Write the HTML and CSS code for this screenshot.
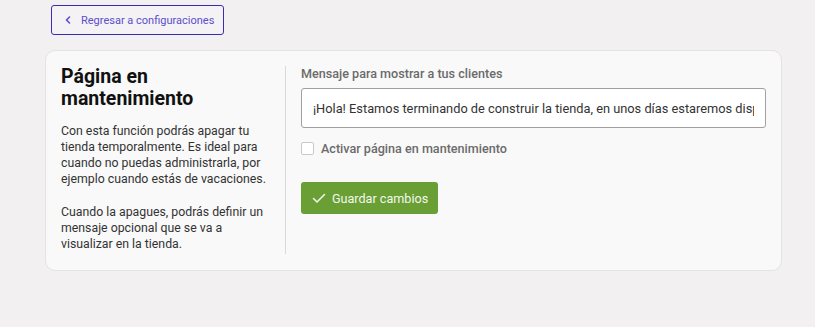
FILE: index.html
```html
<!DOCTYPE html>
<html lang="es">
<head>
    <meta charset="UTF-8">
    <meta name="viewport" content="width=device-width, initial-scale=1.0">
    <title>Página en mantenimiento</title>
    <link rel="stylesheet" href="styles.css">
</head>
<body>
    <div class="top-bar">
        <a href="#" class="back-button">
            <svg width="8" height="8" viewBox="0 0 8 8"><path d="M5.5 1 L2.5 4 L5.5 7" fill="none" stroke="currentColor" stroke-width="1.6" stroke-linecap="round" stroke-linejoin="round"/></svg>
            Regresar a configuraciones
        </a>
    </div>

    <div class="card">
        <div class="card-info">
            <h2>Página en mantenimiento</h2>
            <p>Con esta función podrás apagar tu tienda temporalmente. Es ideal para cuando no puedas administrarla, por ejemplo cuando estás de vacaciones.</p>
            <p>Cuando la apagues, podrás definir un mensaje opcional que se va a visualizar en la tienda.</p>
        </div>

        <div class="card-form">
            <label class="field-label" for="message">Mensaje para mostrar a tus clientes</label>
            <input type="text" id="message" class="text-input" value="¡Hola! Estamos terminando de construir la tienda, en unos días estaremos disponibles.">

            <label class="check-row">
                <input type="checkbox" class="check-box">
                <span>Activar página en mantenimiento</span>
            </label>

            <button class="save-button">
                <svg width="14" height="14" viewBox="0 0 14 14"><path d="M1.5 7.5 L5 11 L12.5 3.5" fill="none" stroke="currentColor" stroke-width="1.5" stroke-linecap="round" stroke-linejoin="round"/></svg>
                Guardar cambios
            </button>
        </div>
    </div>
</body>
</html>
```

FILE: styles.css
```css
* {
    margin: 0;
    padding: 0;
    box-sizing: border-box;
    font-family: 'Roboto', 'Noto Sans', sans-serif;
}

body {
    background-color: #f2f0f1;
    padding: 5px 33px 0 45px;
    color: #333;
}

/* Back link */
.top-bar {
    padding-left: 6px;
    height: 45px;
}

.back-button {
    display: inline-flex;
    align-items: center;
    gap: 9px;
    height: 30px;
    width: 173px;
    padding: 0 0 0 12px;
    border: 1px solid #3a2db0;
    border-radius: 3px;
    color: #5a4fcc;
    font-size: 11px;
    white-space: nowrap;
    text-decoration: none;
    background-color: #f4f2f5;
}

/* Card */
.card {
    display: flex;
    background-color: #f9f9f9;
    border: 1px solid #e3e3e3;
    border-radius: 10px;
    padding: 15px 15px 16px;
}

.card-info {
    width: 225px;
    flex-shrink: 0;
    padding-right: 16px;
    border-right: 1px solid #d9d9d9;
    padding-bottom: 2px;
}

.card-info h2 {
    font-size: 19.5px;
    font-weight: 700;
    line-height: 22px;
    color: #111;
    margin-bottom: 13px;
}

.card-info p {
    font-size: 12.3px;
    line-height: 16px;
    color: #333;
    margin-bottom: 17px;
}

.card-info p:last-child {
    margin-bottom: 0;
}

.card-form {
    flex-grow: 1;
    padding-left: 15px;
    display: flex;
    flex-direction: column;
    align-items: flex-start;
}

.field-label {
    font-size: 12.6px;
    font-weight: 500;
    line-height: 16px;
    color: #6b6b6b;
    margin-bottom: 6px;
}

.text-input {
    width: 100%;
    height: 40px;
    border: 1px solid #a0a0a0;
    border-radius: 3px;
    background-color: #fff;
    padding: 0 11px;
    font-size: 12.8px;
    color: #333;
    outline: none;
}

.check-row {
    display: flex;
    align-items: center;
    gap: 7px;
    margin-top: 13px;
    font-size: 12.6px;
    font-weight: 500;
    color: #6b6b6b;
}

.check-box {
    appearance: none;
    width: 13px;
    height: 13px;
    border: 1px solid #c9c9c9;
    border-radius: 2px;
    background-color: #fff;
}

.save-button {
    display: inline-flex;
    align-items: center;
    gap: 6px;
    margin-top: 26px;
    height: 32px;
    width: 137px;
    padding-left: 11px;
    border: none;
    border-radius: 3px;
    background-color: #6a9f36;
    color: #f2f8ec;
    font-size: 12.6px;
    cursor: pointer;
}
```
